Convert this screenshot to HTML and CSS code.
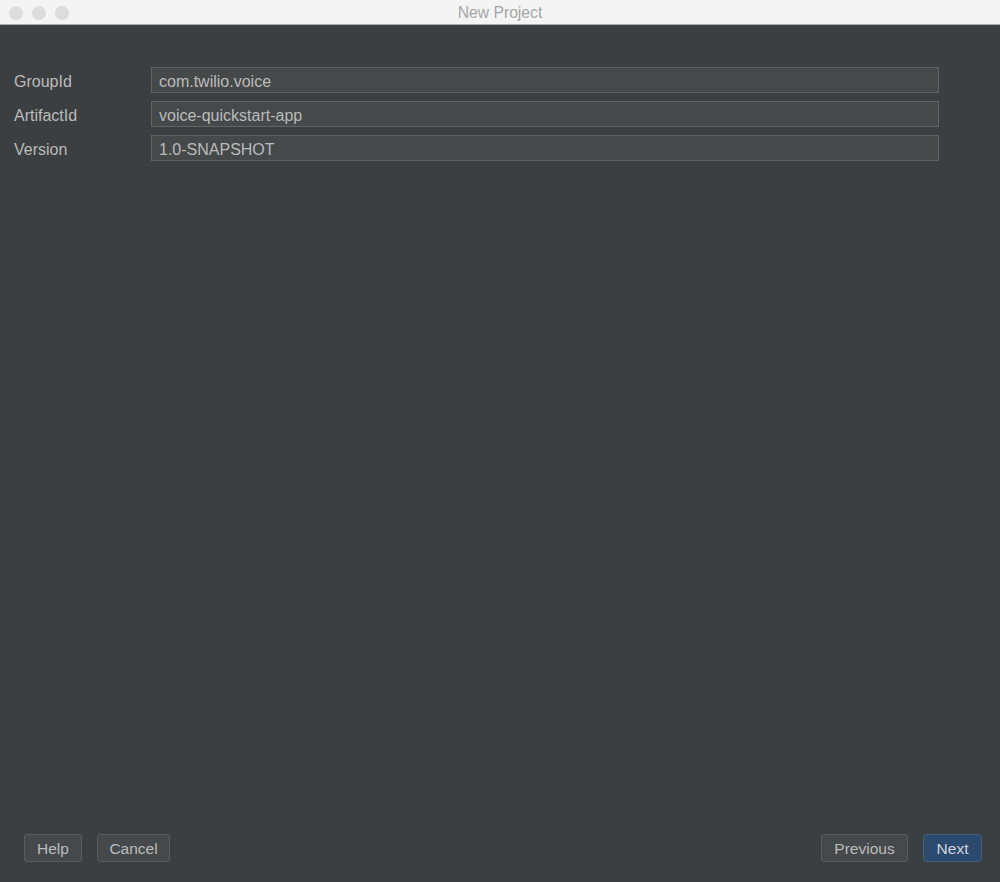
FILE: index.html
```html
<!DOCTYPE html>
<html>
<head>
<meta charset="utf-8">
<title>New Project</title>
<link rel="stylesheet" href="styles.css">
</head>
<body>
<div class="window">
  <div class="titlebar">
    <div class="lights">
      <span class="light"></span>
      <span class="light"></span>
      <span class="light"></span>
    </div>
    <div class="title">New Project</div>
  </div>
  <div class="content">
    <div class="form">
      <label class="label">GroupId</label>
      <div class="field">com.twilio.voice</div>
      <label class="label">ArtifactId</label>
      <div class="field">voice-quickstart-app</div>
      <label class="label">Version</label>
      <div class="field">1.0-SNAPSHOT</div>
    </div>
  </div>
  <div class="footer">
    <div class="group">
      <button class="btn btn-help">Help</button>
      <button class="btn btn-cancel">Cancel</button>
    </div>
    <div class="group">
      <button class="btn btn-prev">Previous</button>
      <button class="btn btn-next">Next</button>
    </div>
  </div>
</div>
</body>
</html>
```
FILE: styles.css
```css
html, body {
  margin: 0;
  padding: 0;
  background: #3c3f41;
}
.window {
  width: 1000px;
  height: 882px;
  display: flex;
  flex-direction: column;
  font-family: "Liberation Sans", Arial, sans-serif;
  font-size: 16px;
  color: #bbbbbb;
  background: #3c3f41;
}
.titlebar {
  height: 24px;
  flex: none;
  background: #f4f4f4;
  border-bottom: 1px solid #a9a9a9;
  position: relative;
  display: flex;
  align-items: center;
  justify-content: center;
}
.lights {
  position: absolute;
  left: 9px;
  top: 6px;
  display: flex;
  gap: 9px;
}
.light {
  width: 14px;
  height: 14px;
  border-radius: 50%;
  background: #dcdcdc;
}
.title {
  color: #a6a6a6;
  font-size: 15.7px;
  padding-top: 1px;
}
.content {
  flex: 1;
  padding: 42px 60px 0 14px;
}
.form {
  display: grid;
  grid-template-columns: 137px 788px;
  row-gap: 8px;
  align-items: center;
}
.label {
  color: #bbbbbb;
  padding-top: 3px;
}
.field {
  height: 24px;
  line-height: 27px;
  border: 1px solid #626566;
  background: #45494a;
  padding: 0 7px;
  color: #bbbbbb;
  overflow: hidden;
}
.footer {
  flex: none;
  height: 48px;
  padding: 0 18px 0 24px;
  display: flex;
  justify-content: space-between;
  align-items: flex-start;
}
.group {
  display: flex;
  gap: 15px;
}
.btn {
  font-family: "Liberation Sans", Arial, sans-serif;
  font-size: 15.5px;
  color: #bbbbbb;
  background: #46494b;
  border: 1px solid #5a5d5f;
  border-radius: 3px;
  height: 28px;
  padding: 2px 0 0 0;
  margin: 0;
}
.btn-help { width: 58px; }
.btn-cancel { width: 73px; }
.btn-prev { width: 87px; }
.btn-next {
  width: 59px;
  background: #2c4a6d;
  border-color: #4a5d73;
  color: #cfd5dc;
}
```
